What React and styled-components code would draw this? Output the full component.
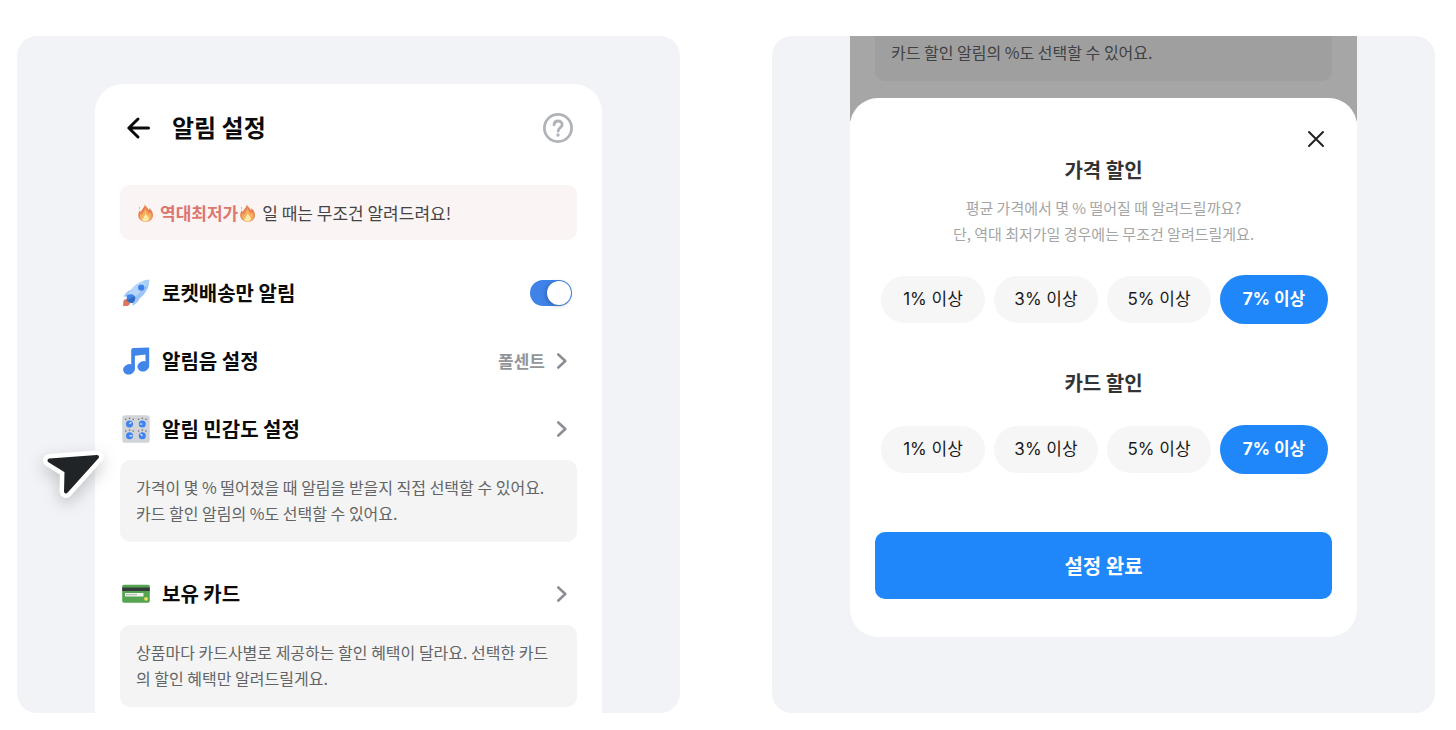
import React, { useState } from 'react';
import styled, { createGlobalStyle } from 'styled-components';

const percents = [1, 3, 5, 7];

export default function App() {
    const [rocketOnly, setRocketOnly] = useState(true);
    const [price, setPrice] = useState(7);
    const [card, setCard] = useState(7);

    return (
        <>
            <GlobalStyle />
            <Page>
                <Panel>
                    <Phone>
                        <Header>
                            <IconButton type="button" aria-label="뒤로">
                                <BackIcon />
                            </IconButton>
                            <Title>알림 설정</Title>
                            <IconButton type="button" aria-label="도움말">
                                <HelpIcon />
                            </IconButton>
                        </Header>
                        <Banner>
                            <FireIcon />
                            <Lowest>역대최저가</Lowest>
                            <FireIcon />
                            <span>일 때는 무조건 알려드려요!</span>
                        </Banner>
                        <Settings>
                            <Row>
                                <RocketIcon />
                                <Label htmlFor="rocket">로켓배송만 알림</Label>
                                <Toggle
                                    id="rocket"
                                    type="checkbox"
                                    checked={rocketOnly}
                                    onChange={(e) => setRocketOnly(e.target.checked)}
                                />
                            </Row>
                            <RowButton type="button">
                                <MusicIcon />
                                <Label as="span">알림음 설정</Label>
                                <Value>폴센트</Value>
                                <ChevronIcon />
                            </RowButton>
                            <Group>
                                <RowButton type="button">
                                    <KnobsIcon />
                                    <Label as="span">알림 민감도 설정</Label>
                                    <ChevronIcon />
                                </RowButton>
                                <Note>
                                    가격이 몇 % 떨어졌을 때 알림을 받을지 직접 선택할 수 있어요.
                                    <br />
                                    카드 할인 알림의 %도 선택할 수 있어요.
                                </Note>
                            </Group>
                            <Group>
                                <RowButton type="button">
                                    <CardIcon />
                                    <Label as="span">보유 카드</Label>
                                    <ChevronIcon />
                                </RowButton>
                                <Note>
                                    상품마다 카드사별로 제공하는 할인 혜택이 달라요. 선택한 카드
                                    <br />
                                    의 할인 혜택만 알려드릴게요.
                                </Note>
                            </Group>
                        </Settings>
                    </Phone>
                    <Pointer viewBox="0 0 80 80" aria-hidden="true">
                        <path d="M16.500 24.500 64 21 33 55.500 33.500 35Z" fill="#fff" stroke="#fff" strokeWidth="13" />
                        <path d="M16.500 24.500 64 21 33 55.500 33.500 35Z" fill="#202426" stroke="#202426" strokeWidth="4" />
                    </Pointer>
                </Panel>

                <SheetPanel>
                    <Dimmed>
                        <DimNote>카드 할인 알림의 %도 선택할 수 있어요.</DimNote>
                    </Dimmed>
                    <Sheet>
                        <CloseButton type="button" aria-label="닫기">
                            <CloseIcon />
                        </CloseButton>
                        <SheetTitle>가격 할인</SheetTitle>
                        <SheetText>
                            평균 가격에서 몇 % 떨어질 때 알려드릴까요?
                            <br />
                            단, 역대 최저가일 경우에는 무조건 알려드릴게요.
                        </SheetText>
                        <Options value={price} onSelect={setPrice} />
                        <CardSection>
                            <SheetTitle>카드 할인</SheetTitle>
                            <Options value={card} onSelect={setCard} />
                        </CardSection>
                        <Submit type="button">설정 완료</Submit>
                    </Sheet>
                </SheetPanel>
            </Page>
        </>
    );
}

function Options({ value, onSelect }) {
    return (
        <Chips>
            {percents.map((p) => (
                <Chip
                    key={p}
                    type="button"
                    $active={p === value}
                    aria-pressed={p === value}
                    onClick={() => onSelect(p)}
                >
                    {p}% 이상
                </Chip>
            ))}
        </Chips>
    );
}

const BackIcon = () => (
    <svg width="24" height="24" viewBox="0 0 24 24" fill="none" stroke="#0b0b0b" strokeWidth="3" strokeLinecap="round" strokeLinejoin="round">
        <path d="M22.500 12H3M12 3 2.800 12 12 21" />
    </svg>
);

const HelpIcon = () => (
    <svg width="30" height="30" viewBox="0 0 30 30" fill="none" stroke="#b0b4b8" strokeWidth="2.8" strokeLinecap="round">
        <circle cx="15" cy="15" r="13.600" />
        <path d="M11 11.800C11.200 9.300 12.800 8 15.100 8c2.300 0 4.100 1.400 4.100 3.500 0 3-4 3.300-4 6.700" />
        <circle cx="15" cy="22" r="1.700" fill="#b0b4b8" stroke="none" />
    </svg>
);

const FireIcon = () => (
    <svg width="17" height="18" viewBox="0 0 17 18">
        <path d="M7.800.300c.8 2.400 3.200 3.800 4.200 6 .4-.7.500-1.400.4-2.200 2.200 2 3.600 4.500 3.600 7.100 0 3.800-3 6.500-7.300 6.500S1.200 15 1.200 11.300C1.200 9.200 2 7.500 3 6c.1 1 .5 1.700 1.100 2.200C4.200 5.200 7.600 4 7.800.300Z" fill="#e9824f" />
        <path d="M2.300 2.800c.8.700.8 1.500.1 2.400C1.700 4.500 1.600 3.700 2.300 2.800Z" fill="#ef9a63" />
        <path d="M8 4c.5 2.300 3 3.900 3.700 5.900.7-.4 1.100-1 1.200-1.800 1.300 1.300 1.700 2.700 1.700 4.200 0 3.100-2.300 5.200-5.900 5.200s-5.900-2-5.900-4.900c0-1.400.4-2.500 1-3.400.3.900.8 1.400 1.500 1.700C5.400 8.500 8 7.400 8 4Z" fill="#f6b060" />
        <path d="M8.500 9.200c.2 1.600 2.200 2.500 3.100 4.200 1 2.100-.8 4.100-2.900 4.100-2.300 0-4.100-1.500-3.700-3.600.2.600.6.900 1.300 1.100-.2-2.300 1.900-3.300 2.200-5.800Z" fill="#fde9a8" />
    </svg>
);

const RocketIcon = () => (
    <svg width="28" height="28" viewBox="0 0 28 28">
        <path d="M1.400 22.200c.6-1.700 2.500-2.500 4.400-1.900l2.100 2.200c.6 1.900-.2 3.600-2 4.200-1.300.5-3.100-.1-4.900.5.500-1.700-.1-3.300.4-5Z" fill="#df7558" />
        <path d="M10.200 10.400C7 10.600 3.600 13.800 1.500 17.700l6.300-.3ZM17.700 18c.200 3.300-3.400 6.700-7.200 8.900l.3-6.300Z" fill="#9fc6f5" />
        <path d="M4.600 20.300C6.700 10.500 14.600 1.400 27.300.700 26.700 13.500 17.700 21.400 7.900 23.500Z" fill="#b7d6f9" />
        <path d="M6 22c8.300-4.400 15.900-11.400 21.300-21.300C26.700 13.500 17.700 21.400 7.900 23.500Z" fill="#9cc5f5" />
        <path d="M20.700 1.900C23 1.100 25 .800 27.300.700c-.1 2.200-.4 4.400-1.200 6.600-2.200-.9-4.200-3-5.400-5.400Z" fill="#a9cef8" />
        <circle cx="19.200" cy="8.600" r="3.200" fill="#3e82e8" />
        <path d="M5 16.200C8.200 14.800 11 15.200 12.600 17c1.300 1.700.9 4.400-1.900 7.300L4.600 20.500Z" fill="#3f83e8" />
        <path d="M4.200 21.600 12.800 17.500c1 3-.6 5.200-3.900 6.800Z" fill="#3269bd" />
    </svg>
);

const MusicIcon = () => (
    <svg width="28" height="28" viewBox="0 0 28 28" fill="#4285e8">
        <path d="M9.200 3.300C9.200 1.900 9.900 1.200 11.200 1L27.200.4v18.500h-3.700V7.400L12.900 8.700v13.700H9.200Z" />
        <ellipse cx="7" cy="22.300" rx="5.900" ry="5.200" transform="rotate(-20 7 22.300)" />
        <ellipse cx="21.300" cy="19.300" rx="5.900" ry="5.200" transform="rotate(-20 21.300 19.300)" />
    </svg>
);

const KnobsIcon = () => (
    <svg width="28" height="28" viewBox="0 0 28 28">
        <rect x=".3" y=".3" width="27.400" height="27.400" rx="2.500" fill="#d1d4d8" />
        {[[7.500, 9], [20.300, 9], [7.500, 20.800], [20.300, 20.800]].map(([x, y], i) => (
            <g key={i} transform={`translate(${x} ${y})`}>
                <circle cx="-3.700" cy="-4.800" r=".8" fill="#6a6e74" />
                <circle cx="0" cy="-5.700" r=".8" fill="#6a6e74" />
                <circle cx="3.700" cy="-4.800" r=".8" fill="#6a6e74" />
                <circle r="3.500" fill="#3f83f0" />
                <path d={['M.3-.3 1.600-1.600', 'M-.3 0H-2', 'M.3 0H2.300', 'M-.3-.3-1.600-1.600'][i]} stroke="#e3edfb" strokeWidth="1.200" strokeLinecap="round" />
            </g>
        ))}
    </svg>
);

const CardIcon = () => (
    <svg width="28" height="28" viewBox="0 0 28 28">
        <rect x=".2" y="4.800" width="27.600" height="18" rx="1.800" fill="#55a451" />
        <path d="M.2 7.600h27.600v3.400H.2Z" fill="#343b3b" />
        <path d="M3 13h18.500v3.600H3Z" fill="#f1f3ed" />
        <path d="M4 14.700h11" stroke="#a8b5ad" strokeWidth="1" />
        <circle cx="24" cy="18.800" r="1.900" fill="#f1dc58" />
    </svg>
);

const ChevronIcon = () => (
    <svg width="20" height="20" viewBox="0 0 20 20" fill="none" stroke="#8b8e92" strokeWidth="2.600" strokeLinecap="round" strokeLinejoin="round">
        <path d="M6.300 3.500 13.300 10l-7 6.500" />
    </svg>
);

const CloseIcon = () => (
    <svg width="24" height="24" viewBox="0 0 24 24" fill="none" stroke="#222" strokeWidth="2" strokeLinecap="round">
        <path d="m5 5 14 14M19 5 5 19" />
    </svg>
);

const GlobalStyle = createGlobalStyle`
    * {
        box-sizing: border-box;
    }
    body {
        margin: 0;
        background: #fff;
        font-family: 'Noto Sans CJK KR', sans-serif;
        color: #0b0b0b;
    }
    button {
        border: 0;
        padding: 0;
        background: none;
        color: inherit;
        font-family: inherit;
        cursor: pointer;
    }
    svg {
        display: block;
        flex-shrink: 0;
    }
`;

const Page = styled.main`
    display: grid;
    grid-template-columns: 1fr 1fr;
    gap: 92px;
    height: 100vh;
    min-height: 640px;
    padding: 36px 21px 17px 17px;
`;
const Panel = styled.section`
    position: relative;
    min-width: 0;
    padding: 48px 78px 0;
    border-radius: 20px;
    background: #f1f3f7;
    overflow: hidden;
`;
const SheetPanel = styled(Panel)`
    padding-top: 0;
`;
const Phone = styled.div`
    height: 100%;
    padding: 28px 25px 0;
    border-radius: 28px 28px 0 0;
    background: #fff;
`;
const Header = styled.header`
    display: flex;
    align-items: center;
    gap: 22px;
    height: 32px;
    padding: 0 4px 0 6px;
`;
const IconButton = styled.button`
    display: flex;
`;
const Title = styled.h1`
    flex: 1;
    margin: 0;
    padding-bottom: 2px;
    font-size: 24px;
    line-height: 32px;
    font-weight: 700;
`;
const Banner = styled.p`
    display: flex;
    align-items: center;
    height: 55px;
    margin: 41px 0 0;
    padding: 0 17px;
    border-radius: 10px;
    background: #fbf4f4;
    color: #444;
    font-size: 17px;
    white-space: nowrap;

    span {
        margin-left: 6px;
    }
`;
const Lowest = styled.strong`
    margin: 0 1px 0 6px;
    color: #dc7770;
    font-weight: 700;
`;
const Settings = styled.div`
    display: flex;
    flex-direction: column;
    gap: 36px;
    margin-top: 37px;
`;
const Group = styled.div`
    display: flex;
    flex-direction: column;
    gap: 15px;
`;
const Row = styled.div`
    display: flex;
    align-items: center;
    width: 100%;
    height: 32px;
    padding: 0 5px 0 2px;
`;
const RowButton = styled(Row).attrs({ as: 'button' })`
    text-align: left;
`;
const Label = styled.label`
    flex: 1;
    margin-left: 12px;
    font-size: 20px;
    line-height: 32px;
    font-weight: 700;
`;
const Value = styled.span`
    margin-right: 7px;
    padding-bottom: 2px;
    color: #92959a;
    font-size: 17px;
    font-weight: 700;
`;
const Toggle = styled.input`
    appearance: none;
    display: flex;
    width: 42px;
    height: 26px;
    margin: 0;
    padding: 1px;
    border-radius: 13px;
    background: #c9ccd1;
    cursor: pointer;

    &::before {
        content: '';
        width: 24px;
        height: 24px;
        border-radius: 50%;
        background: #fff;
        box-shadow: -1px 1px 4px rgba(0, 0, 0, 0.25);
    }
    &:checked {
        justify-content: flex-end;
        background: #3f82e8;
    }
`;
const Note = styled.p`
    margin: 0;
    padding: 14px 16px 16px;
    border-radius: 10px;
    background: #f4f4f4;
    color: #626466;
    font-size: 16px;
    line-height: 26px;
`;
/* floats over the panel and the phone edge */
const Pointer = styled.svg`
    position: absolute;
    top: 400px;
    left: 16px;
    width: 80px;
    height: 80px;
    stroke-linejoin: round;
    filter: drop-shadow(0 6px 8px rgba(0, 0, 0, 0.2));
`;
const Dimmed = styled.div`
    padding: 0 25px 40px;
    background: #a6a6a6;
`;
const DimNote = styled(Note)`
    padding-top: 3px;
    border-radius: 0 0 10px 10px;
    background: #9f9f9f;
    color: #404142;
`;
const Sheet = styled.div`
    position: relative;
    display: flex;
    flex-direction: column;
    margin-top: -23px;
    padding: 29px 25px 38px;
    border-radius: 28px;
    background: #fff;
`;
const CloseButton = styled(IconButton)`
    align-self: flex-end;
    margin: 0 4px 5px 0;
`;
const SheetTitle = styled.h2`
    margin: 0;
    color: #333;
    font-size: 20px;
    line-height: 28px;
    font-weight: 700;
    text-align: center;
`;
const SheetText = styled.p`
    margin: 11px 0 0;
    color: #a5a5a5;
    font-size: 15px;
    line-height: 26px;
    text-align: center;
`;
const Chips = styled.div`
    display: flex;
    align-items: center;
    gap: 9px;
    height: 49px;
    margin-top: 28px;
    padding: 0 4px 0 6px;
`;
const Chip = styled.button`
    flex: ${({ $active }) => ($active ? 108 : 104)} 1 0;
    height: ${({ $active }) => ($active ? 49 : 47)}px;
    padding-bottom: 4px;
    border-radius: 25px;
    background: ${({ $active }) => ($active ? '#1f87f9' : '#f6f6f6')};
    color: ${({ $active }) => ($active ? '#fff' : '#1a1a1a')};
    font-family: Inter, 'Noto Sans CJK KR', sans-serif;
    font-size: 17px;
    font-weight: ${({ $active }) => ($active ? 700 : 400)};
`;
const CardSection = styled.div`
    margin-top: 45px;
`;
const Submit = styled.button`
    height: 67px;
    margin-top: 58px;
    border-radius: 10px;
    background: #1f87f9;
    color: #fff;
    font-size: 20px;
    font-weight: 700;
`;
